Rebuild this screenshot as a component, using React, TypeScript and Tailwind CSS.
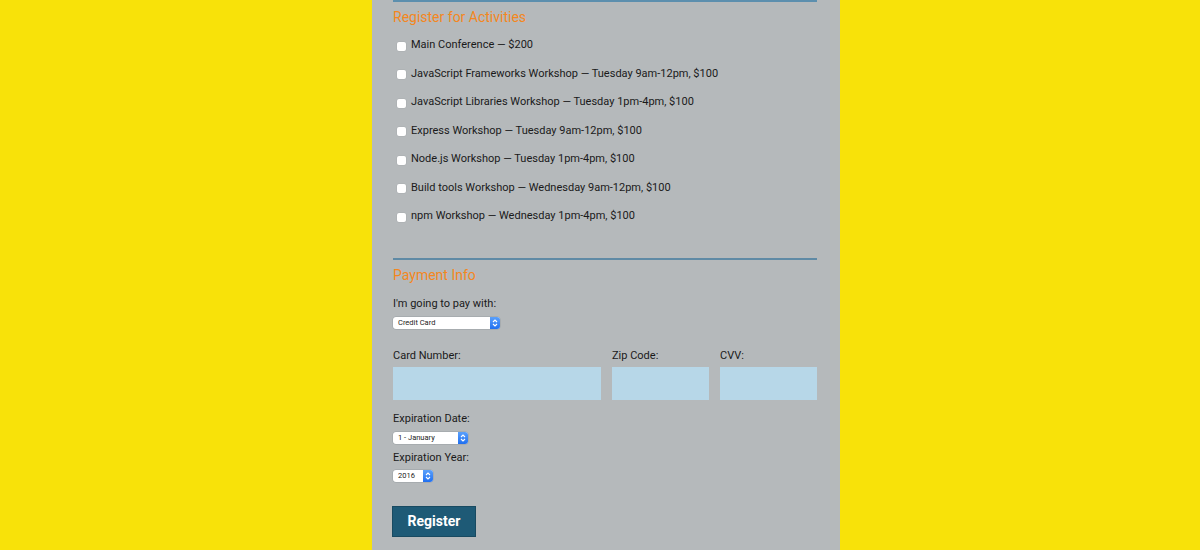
const activities = [
  'Main Conference — $200',
  'JavaScript Frameworks Workshop — Tuesday 9am-12pm, $100',
  'JavaScript Libraries Workshop — Tuesday 1pm-4pm, $100',
  'Express Workshop — Tuesday 9am-12pm, $100',
  'Node.js Workshop — Tuesday 1pm-4pm, $100',
  'Build tools Workshop — Wednesday 9am-12pm, $100',
  'npm Workshop — Wednesday 1pm-4pm, $100',
];

function FakeSelect({ label, width }: { label: string; width: string }) {
  return (
    <div className={`flex h-[12px] ${width} rounded-[3px] bg-white shadow-[0_0_0_0.5px_#9aa0a4] overflow-hidden`}>
      <span className="flex-1 pl-[5px] text-[7.5px] leading-[12px] text-[#222]">{label}</span>
      <span className="flex w-[10px] flex-col items-center justify-center bg-gradient-to-b from-[#5aa0fb] to-[#1f6ff0]">
        <svg width="6" height="8" viewBox="0 0 6 8" fill="none" stroke="white" strokeWidth="1.1">
          <path d="M1 3 L3 1 L5 3" />
          <path d="M1 5 L3 7 L5 5" />
        </svg>
      </span>
    </div>
  );
}

export default function App() {
  return (
    <main className="min-h-screen h-[550px] bg-[#f8e209] flex justify-center font-['Roboto',sans-serif] overflow-hidden">
      <div className="w-[468px] ml-[12px] bg-[#b5b9bb] pl-[21px] pr-[23px] pb-[14px]">
        <div className="border-t-2 border-[#5c8fae]" />
        <h2 className="mt-[6px] text-[14px] leading-[18px] text-[#f4871e]">Register for Activities</h2>
        <ul className="mt-[10px] space-y-[10px] pl-[4px]">
          {activities.map((a) => (
            <li key={a} className="flex items-center gap-[5px] h-[18.5px] text-[11px] text-[#1a1a1a]">
              <span className="mt-[2px] w-[9px] h-[9px] rounded-[2px] bg-white shadow-[0_0_0_0.5px_#a9adb0]" />
              {a}
            </li>
          ))}
        </ul>

        <div className="mt-[32px] border-t-2 border-[#5f8aa5]" />
        <h2 className="mt-[6px] text-[14px] leading-[18px] text-[#f4871e]">Payment Info</h2>
        <p className="mt-[13px] text-[11px] leading-[14px] text-[#1a1a1a]">I'm going to pay with:</p>
        <div className="mt-[6px]">
          <FakeSelect label="Credit Card" width="w-[107px]" />
        </div>

        <div className="mt-[20px] flex gap-[11px]">
          <label className="flex flex-col w-[208px]">
            <span className="text-[11px] leading-[14px] text-[#1a1a1a]">Card Number:</span>
            <span className="mt-[4px] h-[33px] bg-[#b7d7e8]" />
          </label>
          <label className="flex flex-col w-[97px]">
            <span className="text-[11px] leading-[14px] text-[#1a1a1a]">Zip Code:</span>
            <span className="mt-[4px] h-[33px] bg-[#b7d7e8]" />
          </label>
          <label className="flex flex-col w-[97px]">
            <span className="text-[11px] leading-[14px] text-[#1a1a1a]">CVV:</span>
            <span className="mt-[4px] h-[33px] bg-[#b7d7e8]" />
          </label>
        </div>

        <p className="mt-[12px] text-[11px] leading-[14px] text-[#1a1a1a]">Expiration Date:</p>
        <div className="mt-[6px]">
          <FakeSelect label="1 - January" width="w-[75px]" />
        </div>
        <p className="mt-[7px] text-[11px] leading-[14px] text-[#1a1a1a]">Expiration Year:</p>
        <div className="mt-[5px]">
          <FakeSelect label="2016" width="w-[40px]" />
        </div>

        <button className="mt-[24px] -ml-[1px] w-[84px] h-[31px] bg-[#1e5a76] border border-[#184a61] text-white text-[14px] font-bold">
          Register
        </button>
      </div>
    </main>
  );
}
